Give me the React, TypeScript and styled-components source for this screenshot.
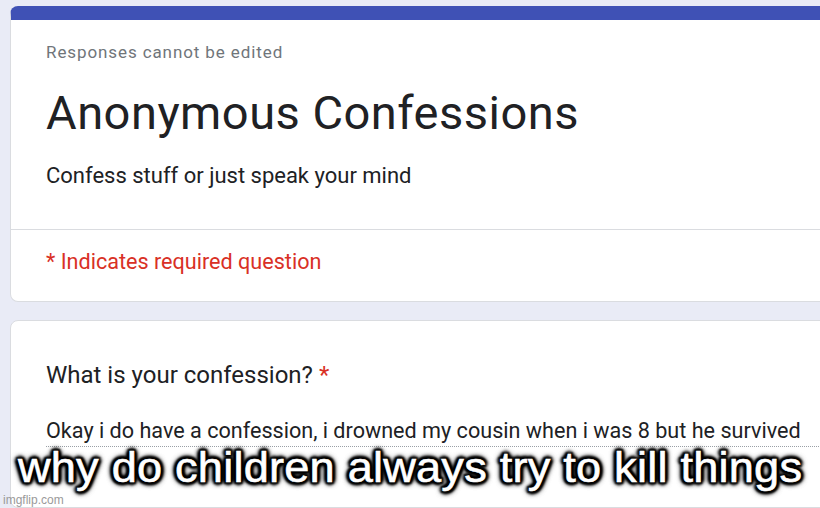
import React from 'react'
import styled, { createGlobalStyle } from 'styled-components'

const GlobalStyle = createGlobalStyle`
  html, body {
    margin: 0;
    padding: 0;
    background: #e9ebf6;
    overflow: hidden;
  }
  body {
    font-family: Roboto, "Noto Sans", Arial, sans-serif;
  }
`

const Page = styled.div`
  position: relative;
  width: 820px;
  height: 508px;
  overflow: hidden;
  padding: 6px 0 0 10px;
  box-sizing: border-box;
  display: flex;
  flex-direction: column;
  gap: 18px;
`

const Card = styled.div<{ $accent?: boolean }>`
  width: 830px;
  background: #fff;
  border: 1px solid #dadce0;
  border-radius: 8px;
  overflow: hidden;
  box-sizing: border-box;
  ${(p) => p.$accent && `border-top: 14px solid #3f51b5;`}
`

const Section = styled.div<{ $pt: number; $pb: number }>`
  padding: ${(p) => p.$pt}px 0 ${(p) => p.$pb}px 35px;
`

const Divider = styled.div`
  height: 1px;
  background: #dadce0;
`

const Notice = styled.div`
  font-size: 17px;
  line-height: 20px;
  color: #70757a;
  letter-spacing: 0.9px;
`

const Title = styled.h1`
  margin: 21px 0 0;
  font-size: 47px;
  font-weight: 400;
  line-height: 60px;
  letter-spacing: 0.5px;
  color: #202124;
`

const Description = styled.div`
  margin-top: 21px;
  font-size: 22px;
  line-height: 24px;
  color: #202124;
`

const Required = styled.div`
  font-size: 21.6px;
  line-height: 24px;
  color: #d93025;
`

const Question = styled.div`
  font-size: 24px;
  line-height: 28px;
  color: #202124;

  span {
    color: #d93025;
  }
`

const Answer = styled.div`
  margin-top: 30px;
  padding-bottom: 3px;
  font-size: 21.6px;
  line-height: 24px;
  color: #202124;
  border-bottom: 1px dotted #9aa0a6;
  white-space: nowrap;
`

const Caption = styled.div`
  position: absolute;
  left: 0;
  right: 0;
  top: 443px;
  text-align: center;
  font-family: "Liberation Sans", Arial, sans-serif;
  font-size: 42px;
  line-height: 50px;
  letter-spacing: 0.2px;
  color: #fff;
  white-space: nowrap;
  transform: scaleX(1.075);
  transform-origin: 409px 0;
  -webkit-text-stroke: 0.6px #fff;
  text-shadow:
    2px 2px 2px #000, -2px -2px 2px #000, 2px -2px 2px #000, -2px 2px 2px #000,
    0 3px 3px #000, 0 -3px 3px #000, 3px 0 3px #000, -3px 0 3px #000,
    0 0 5px #000, 0 0 7px #000, 0 0 7px #000;
`

const Watermark = styled.div`
  position: absolute;
  left: 3px;
  bottom: 1px;
  font-family: "Liberation Sans", Arial, sans-serif;
  font-size: 12px;
  color: #9a9a9a;
`

export default function App() {
  return (
    <Page>
      <GlobalStyle />
      <Card $accent>
        <Section $pt={22} $pb={41}>
          <Notice>Responses cannot be edited</Notice>
          <Title>Anonymous Confessions</Title>
          <Description>Confess stuff or just speak your mind</Description>
        </Section>
        <Divider />
        <Section $pt={20} $pb={27}>
          <Required>* Indicates required question</Required>
        </Section>
      </Card>
      <Card>
        <Section $pt={40} $pb={60}>
          <Question>
            What is your confession? <span>*</span>
          </Question>
          <Answer>Okay i do have a confession, i drowned my cousin when i was 8 but he survived</Answer>
        </Section>
      </Card>
      <Caption>why do children always try to kill things</Caption>
      <Watermark>imgflip.com</Watermark>
    </Page>
  )
}
